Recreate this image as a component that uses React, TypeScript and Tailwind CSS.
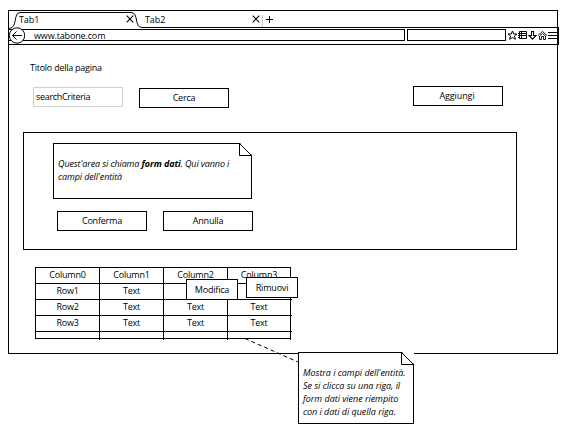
import type { ReactNode } from "react";

function Button({ children, className = "" }: { children: ReactNode; className?: string }) {
  return (
    <button className={`flex h-5 w-[90px] items-center justify-center border border-black bg-white tracking-[-0.2px] ${className}`}>
      {children}
    </button>
  );
}

function Note({ children, className = "" }: { children: ReactNode; className?: string }) {
  return (
    <div className={`border border-black bg-white italic leading-[13px] ${className}`}>
      <svg className="absolute -top-px -right-px" width="13" height="13" viewBox="0 0 13 13" fill="none">
        <path d="M1 0H13V12Z" fill="white" />
        <path d="M.5 0V12.5H13M.5 .5L12.5 12.5" stroke="black" />
      </svg>
      {children}
    </div>
  );
}

function Close() {
  return (
    <svg width="8" height="8" viewBox="0 0 8 8" fill="none" stroke="black" strokeWidth="1.1">
      <path d="M.7 .7L7.3 7.3M7.3 .7L.7 7.3" />
    </svg>
  );
}

function TabBar() {
  return (
    <div className="relative flex h-[17px] w-full pt-[5px]">
      <svg className="absolute top-0 left-0" width="550" height="19" viewBox="8 10 550 19" fill="none" stroke="black">
        <path d="M9 28.5C18 28 13 12.5 20 12.5H131C139 12.5 134 27.5 142 27.5H558" />
        <path d="M262.5 15V27" stroke="#c8c8c8" />
      </svg>
      <span className="ml-[11px] w-[107px] leading-[10px] tracking-[-0.1px]">Tab1</span>
      <Close />
      <span className="ml-[11px] w-[107px] leading-[10px] tracking-[-0.1px]">Tab2</span>
      <Close />
      <svg className="ml-[6px]" width="7" height="8" viewBox="0 0 7 8" stroke="black">
        <path d="M0 4.5H7M3.5 1V8" />
      </svg>
    </div>
  );
}

function AddressBar() {
  return (
    <div className="relative flex h-[18px] w-[551px] border-b border-black pt-[2px]">
      <div className="h-3 w-[397px] border border-black pl-[25px] leading-[11px] tracking-[-0.15px]">www.tabone.com</div>
      <div className="ml-[2px] h-3 w-[99px] border border-black" />
      <svg className="absolute top-0 left-0" width="551" height="18" viewBox="8 27 551 18" fill="none" stroke="black">
        <path d="M142 27.5H559" />
        <circle cx="17" cy="35.5" r="7.7" fill="white" />
        <path d="M12.5 35.5H22M16.5 31.5L12.5 35.5L16.5 39.5" />
        <path d="M512.5 31L513.7 34H517L514.4 36L515.4 39.3L512.5 37.5L509.6 39.3L510.6 36L508 34H511.3Z" />
        <path d="M519.5 31.5H526.5V38.5H519.5ZM518 33.5H527M518 35.5H527M518 37.5H520M521.5 31V39" />
        <path strokeWidth="1.1" d="M531.5 31.5H533.5V35.5H536L532.5 39.2L529 35.5H531.5Z" />
        <path strokeWidth="0.9" d="M538 35.5L542.5 31.5L547 35.5M539.5 36V39.5H541.5V36.5H543.5V39.5H545.5V36L542.5 33.5Z" />
        <path d="M548 32.5H557M548 35.5H557M548 38.5H557M558.5 27V45" />
      </svg>
    </div>
  );
}

const rows = [
  ["Column0", "Column1", "Column2", "Column3"],
  ["Row1", "Text", "Text", "Text"],
  ["Row2", "Text", "Text", "Text"],
  ["Row3", "Text", "Text", "Text"],
];

function DataTable() {
  return (
    <div className="relative mt-[17px] ml-[26px] w-[256px] border-t border-l border-black">
      {rows.map((row, i) => (
        <div key={row[0]} className="grid h-4 w-[256px] grid-cols-[64px_64px_64px_63px] border-b border-black">
          {row.map((cell, j) => (
            <div key={j} className="border-r border-black text-center leading-[14px] tracking-[-0.22px]">
              {i === 1 && j > 1 ? "" : cell}
            </div>
          ))}
        </div>
      ))}
      <div className="grid h-[7px] grid-cols-[64px_64px_64px_63px] border-b border-black">
        {[0, 1, 2, 3].map((c) => <div key={c} className={c === 3 ? "border-r border-black" : "h-2 border-r border-black"} />)}
      </div>
      <Button className="absolute top-[11px] left-[150px] h-[21px] w-[52px]!">Modifica</Button>
      <Button className="absolute top-[9px] left-[210px] h-[21px] w-[52px]!">Rimuovi</Button>
    </div>
  );
}

export default function App() {
  return (
    <div className="relative h-[433px] w-[568px] overflow-hidden bg-white pt-[10px] pl-2 font-['Open_Sans',sans-serif] text-[9px] text-black">
      <main className="h-[344px] w-[550px] border border-black">
        <div className="-mt-px -ml-px">
          <TabBar />
          <AddressBar />
        </div>
        <h1 className="mt-[17px] ml-[21px] h-3 leading-3 tracking-[-0.25px]">Titolo della pagina</h1>
        <div className="mt-3 flex h-[22px] pl-6">
          <div className="mt-px h-5 w-[90px] border border-[#d0d0d0] pl-[2px] leading-[18px] tracking-[-0.32px]">searchCriteria</div>
          <Button className="mt-[2px] ml-4">Cerca</Button>
          <Button className="ml-[184px] pr-[2px] tracking-[-0.1px]!">Aggiungi</Button>
        </div>
        <section className="mt-[24px] ml-[14px] h-[118px] w-[494px] border border-black pt-[10px] pl-[29px]">
          <Note className="relative h-[56px] w-[199px] pt-[13px] pl-1 tracking-[-0.11px]">
            Quest'area si chiama <b>form dati</b>. Qui vanno i<br />campi dell'entità
          </Note>
          <div className="mt-3 ml-1 flex gap-4">
            <Button>Conferma</Button>
            <Button>Annulla</Button>
          </div>
        </section>
        <DataTable />
      </main>
      <svg className="absolute top-[336px] left-[243px]" width="57" height="29" viewBox="243 336 57 29" stroke="black" strokeDasharray="4 3">
        <path d="M245 338.5L298 362" />
      </svg>
      <Note className="absolute top-[352px] left-[298px] h-[72px] w-[116px] pt-[13px] pl-1 tracking-[-0.03px]">
        Mostra i campi dell'entità.<br />Se si clicca su una riga, il<br />form dati viene riempito<br />con i dati di quella riga.
      </Note>
    </div>
  );
}
